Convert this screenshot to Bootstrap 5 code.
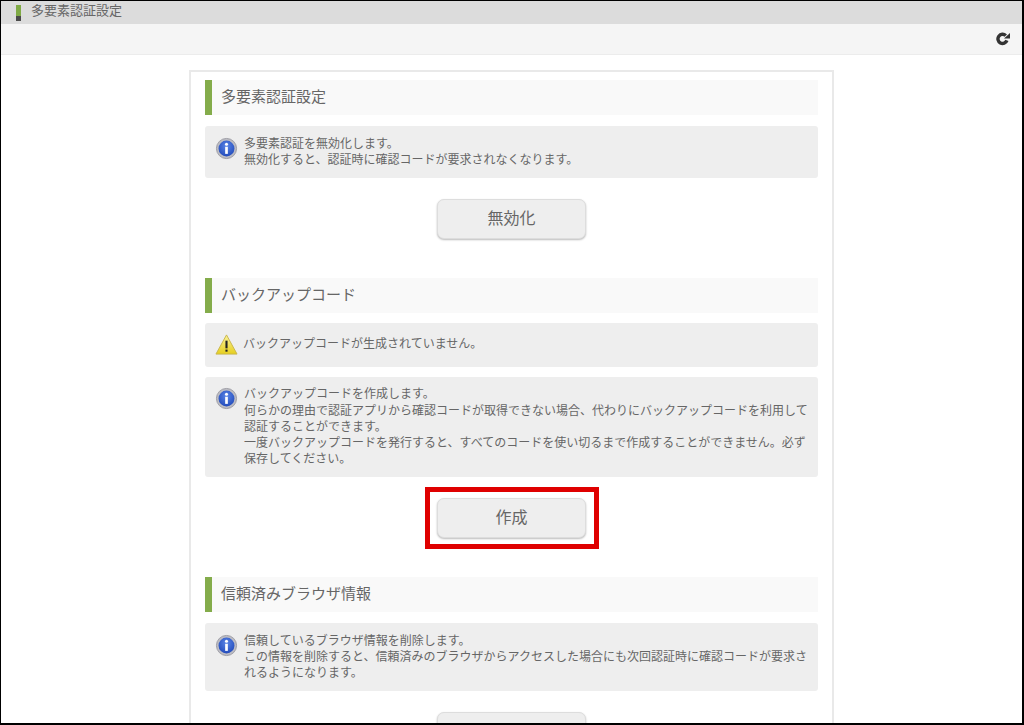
<!DOCTYPE html>
<html lang="ja">
<head>
<meta charset="utf-8">
<title>多要素認証設定</title>
<link href="https://cdn.jsdelivr.net/npm/bootstrap@5.3.0/dist/css/bootstrap.min.css" rel="stylesheet">
<style>
html,body{height:725px;overflow:hidden}
body{font-family:"Liberation Sans","Noto Sans CJK JP",sans-serif;color:#666;background:#fff;font-size:12px}
.frame{height:725px;border:1px solid #000;border-right-width:2px;border-bottom-width:2px;overflow:hidden}
.title-band{height:23px;background:#dcdcdc;padding-left:15px;gap:10px;font-size:13px;line-height:18px}
.title-mark{width:5px;height:16px;background:linear-gradient(#7faa44 0 11px,#4a4a4a 11px)}
.title-text{padding-bottom:4px}
.tool-band{height:31px;background:#f5f5f5;border-bottom:1px solid #ececec;padding-right:12px}
.sheet{width:645px;height:700px;margin:14.5px 0 0 188px;border:2px solid #e9e9e9;border-bottom:0;padding:8.5px 14px 0 14px}
.sect-head{height:35px;background:#f9f9f9;border-left:7px solid #84ac4b;padding-left:9px;font-size:15px;color:#666}
.note{background:#eee;border-radius:3px;padding:9.75px 8px 9.75px 10px;gap:6px;line-height:16.25px}
.note-icon{flex:0 0 23px;margin-top:1px}
.note-warn{height:44px;padding-top:0;padding-bottom:0;gap:5px}
.note-warn .note-icon{margin-top:0}
.act{position:relative;height:40px}
.act-btn{width:149px;height:40px;background:#eee;border:1px solid #ddd;border-radius:7px;box-shadow:0 1px 2px #bbb;font-size:16px;color:#666;padding:0;line-height:36px}
.act-btn:hover{background:#eee;color:#666;border-color:#ddd}
.callout{position:absolute;left:220px;top:-10.5px;width:174px;height:62px;border:5px solid #df0000;pointer-events:none}
.gap-note{margin-top:10px}
.gap-wide{margin-top:11px}
.gap-act{margin-top:20.5px}
.gap-sect{margin-top:39px}
</style>
</head>
<body>
<div class="frame">
  <div class="title-band d-flex align-items-center">
    <span class="title-mark"></span><span class="title-text">多要素認証設定</span>
  </div>
  <div class="tool-band d-flex align-items-center justify-content-end">
    <svg width="14" height="14" viewBox="0 0 14 14" aria-label="更新"><path d="M10.9 8.4A4.6 4.6 0 1 1 9.8 3.6" fill="none" stroke="#333" stroke-width="3.4"/><path d="M8 6.6H14V1Z" fill="#333"/></svg>
  </div>
  <div class="sheet">
    <div class="sect-head d-flex align-items-center">多要素認証設定</div>
    <div class="note gap-wide d-flex">
      <svg class="note-icon" width="23" height="23" viewBox="0 0 24 24"><use href="#ico-info"/></svg>
      <div>多要素認証を無効化します。<br>無効化すると、認証時に確認コードが要求されなくなります。</div>
    </div>
    <div class="act gap-act d-flex justify-content-center"><button type="button" class="btn act-btn">無効化</button></div>

    <div class="sect-head gap-sect d-flex align-items-center">バックアップコード</div>
    <div class="note note-warn gap-note d-flex align-items-center">
      <svg class="note-icon" width="23" height="23" viewBox="0 0 24 24"><use href="#ico-warn"/></svg>
      <div>バックアップコードが生成されていません。</div>
    </div>
    <div class="note gap-note d-flex">
      <svg class="note-icon" width="23" height="23" viewBox="0 0 24 24"><use href="#ico-info"/></svg>
      <div>バックアップコードを作成します。<br>何らかの理由で認証アプリから確認コードが取得できない場合、代わりにバックアップコードを利用して認証することができます。<br>一度バックアップコードを発行すると、すべてのコードを使い切るまで作成することができません。必ず保存してください。</div>
    </div>
    <div class="act gap-act d-flex justify-content-center"><button type="button" class="btn act-btn">作成</button><span class="callout"></span></div>

    <div class="sect-head gap-sect d-flex align-items-center">信頼済みブラウザ情報</div>
    <div class="note gap-wide d-flex">
      <svg class="note-icon" width="23" height="23" viewBox="0 0 24 24"><use href="#ico-info"/></svg>
      <div>信頼しているブラウザ情報を削除します。<br>この情報を削除すると、信頼済みのブラウザからアクセスした場合にも次回認証時に確認コードが要求されるようになります。</div>
    </div>
    <div class="act gap-act d-flex justify-content-center"><button type="button" class="btn act-btn"></button></div>
  </div>
</div>
<svg width="0" height="0" class="position-absolute">
  <defs>
    <radialGradient id="blue" cx="50%" cy="35%" r="70%"><stop offset="0" stop-color="#5b86e6"/><stop offset="1" stop-color="#1f47b8"/></radialGradient>
    <linearGradient id="yel" x1="0" y1="0" x2="0" y2="1"><stop offset="0" stop-color="#fbf39a"/><stop offset="1" stop-color="#e6cf1e"/></linearGradient>
    <symbol id="ico-info" viewBox="0 0 24 24">
      <circle cx="12" cy="12" r="10.5" fill="#bdbdc4" stroke="#9b9ba3"/>
      <circle cx="12" cy="12" r="8.3" fill="url(#blue)"/>
      <circle cx="12" cy="7.6" r="1.6" fill="#fff"/>
      <rect x="10.6" y="10.2" width="2.8" height="7.4" fill="#fff"/>
    </symbol>
    <symbol id="ico-warn" viewBox="0 0 24 24">
      <path d="M12 2 23 22H1Z" fill="url(#yel)" stroke="#c9b64a" stroke-linejoin="round"/>
      <rect x="10.9" y="8" width="2.2" height="8" fill="#222"/>
      <rect x="10.9" y="17.3" width="2.2" height="2.2" fill="#222"/>
    </symbol>
  </defs>
</svg>
</body>
</html>
